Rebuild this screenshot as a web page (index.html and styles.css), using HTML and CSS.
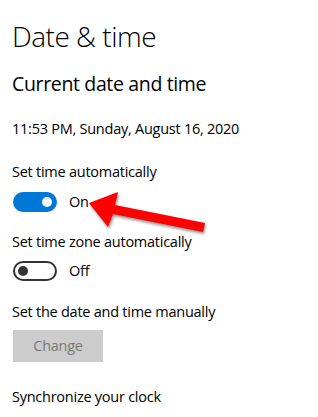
FILE: index.html
```html
<!DOCTYPE html>
<html lang="en">
<head>
<meta charset="utf-8">
<title>Date &amp; time</title>
<link rel="stylesheet" href="styles.css">
</head>
<body>
<main class="page">
  <h1 class="title">Date &amp; time</h1>
  <h2 class="subtitle">Current date and time</h2>
  <p class="now">11:53 PM, Sunday, August 16, 2020</p>

  <p class="label label-auto">Set time automatically</p>
  <div class="toggle-row toggle-row-auto">
    <span class="toggle toggle-on"><span class="knob"></span></span>
    <span class="state">On</span>
  </div>

  <p class="label label-zone">Set time zone automatically</p>
  <div class="toggle-row toggle-row-zone">
    <span class="toggle toggle-off"><span class="knob"></span></span>
    <span class="state">Off</span>
  </div>

  <p class="label label-manual">Set the date and time manually</p>
  <button class="change" disabled>Change</button>

  <p class="label label-sync">Synchronize your clock</p>

  <svg class="arrow" width="318" height="417" viewBox="0 0 318 417" aria-hidden="true">
    <polygon points="89,203 118,192 115,205 205,223 203,232 113,214 108,227" fill="#ff0000"/>
  </svg>
</main>
</body>
</html>
```

FILE: styles.css
```css
html, body {
  margin: 0;
  padding: 0;
  background: #ffffff;
}

body {
  font-family: "Open Sans", "Noto Sans", "Liberation Sans", sans-serif;
  color: #000000;
  overflow: hidden;
}

.page {
  position: relative;
  width: 318px;
  height: 417px;
  padding-left: 12px;
  box-sizing: border-box;
  overflow: hidden;
}

.title {
  margin: 0;
  padding-top: 18px;
  font-size: 28px;
  font-weight: 300;
  letter-spacing: -0.5px;
  line-height: 36px;
}

.subtitle {
  margin: 16px 0 0;
  font-size: 19.5px;
  font-weight: 400;
  letter-spacing: -0.35px;
  line-height: 28px;
}

.now,
.label,
.state,
.change {
  font-size: 14.5px;
  letter-spacing: -0.25px;
}

.now,
.label {
  margin: 0;
  line-height: 20px;
}

.now { margin-top: 21px; }
.label-auto { margin-top: 23px; }
.label-zone { margin-top: 20px; }
.label-manual { margin-top: 21px; }
.label-sync { margin-top: 25px; }

.toggle-row {
  display: flex;
  align-items: center;
  gap: 12px;
  padding-left: 1px;
}

.toggle-row-auto { margin-top: 10px; }
.toggle-row-zone { margin-top: 9px; }

.toggle {
  display: flex;
  align-items: center;
  width: 44px;
  height: 20px;
  box-sizing: border-box;
  border-radius: 10px;
}

.toggle-on {
  background: #0078d7;
  justify-content: flex-end;
  padding-right: 5px;
}

.toggle-on .knob {
  width: 10px;
  height: 10px;
  border-radius: 50%;
  background: #ffffff;
}

.toggle-off {
  border: 2px solid #333333;
  justify-content: flex-start;
  padding-left: 3px;
}

.toggle-off .knob {
  width: 10px;
  height: 10px;
  border-radius: 50%;
  background: #333333;
}

.state {
  line-height: 20px;
}

.change {
  display: block;
  margin: 8px 0 0 1px;
  width: 90px;
  height: 32px;
  padding: 0;
  border: 0;
  background: #cccccc;
  color: #7a7a7a;
  font-family: inherit;
  line-height: 32px;
}

.arrow {
  position: absolute;
  left: 0;
  top: 0;
  filter: drop-shadow(1px 2px 1.5px rgba(0, 0, 0, 0.45));
  pointer-events: none;
}
```
